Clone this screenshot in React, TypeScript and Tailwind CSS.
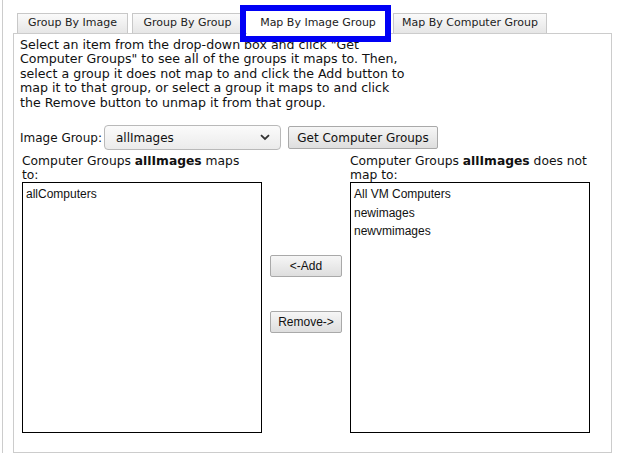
export default function App() {
  const tab =
    "flex h-[20px] items-center justify-center border-x border-t border-[#c8c8c8] bg-gradient-to-b from-[#fafafa] to-[#e6e6e6] text-[11px] text-[#222]";
  const btn =
    "border border-[#a9a9a9] rounded-[2px] bg-gradient-to-b from-[#f6f6f6] to-[#dedede] text-[#111]";

  return (
    <div className="flex h-[453px] w-[622px] overflow-hidden bg-white font-['DejaVu_Sans',sans-serif] text-[#111]">
      <div className="ml-[2px] h-full w-px shrink-0 bg-[#cccccc]" />
      <div className="ml-[10px] flex shrink-0 flex-col pt-[13px]">
        <div className="relative flex gap-[4px] pl-[4px]">
          <div className={`${tab} w-[111px]`}>Group By Image</div>
          <div className={`${tab} w-[111px]`}>Group By Group</div>
          <div className="relative z-10 flex h-[21px] w-[142px] items-center justify-center bg-white text-[11px] text-[#222]">
            Map By Image Group
          </div>
          <div className={`${tab} w-[154px]`}>Map By Computer Group</div>
          <div className="absolute left-[227px] top-[-8px] z-20 h-[37px] w-[151px] border-[6px] border-[#0000f5]" />
        </div>

        <div className="-mt-px h-[440px] w-[599px] border border-[#cccccc] px-[6px] pt-[4px]">
          <p className="text-[12.6px] leading-[14.4px]">
            Select an item from the drop-down box and click "Get
            <br />
            Computer Groups" to see all of the groups it maps to. Then,
            <br />
            select a group it does not map to and click the Add button to
            <br />
            map it to that group, or select a group it maps to and click
            <br />
            the Remove button to unmap it from that group.
          </p>

          <div className="mt-[15px] flex items-center text-[12px]">
            <span className="w-[84px]">Image Group:</span>
            <div className="flex h-[25px] w-[177px] items-center justify-between rounded-[4px] border border-[#b9b9b9] bg-gradient-to-b from-[#fbfbfb] to-[#ebebeb] pl-[11px] pr-[10px]">
              <span>allImages</span>
              <svg width="10" height="7" viewBox="0 0 10 7">
                <path d="M1 1.2 L5 5 L9 1.2" fill="none" stroke="#333" strokeWidth="1.8" />
              </svg>
            </div>
            <button className={`${btn} ml-[7px] h-[23px] w-[150px] text-[12px]`}>
              Get Computer Groups
            </button>
          </div>

          <div className="mt-[4px] flex pl-[2px]">
            <div className="w-[240px]">
              <div className="text-[12.3px] leading-[14px]">
                Computer Groups <b>allImages</b> maps
                <br />
                to:
              </div>
              <div className="h-[251px] border border-black pl-[3px] pt-[2px] font-['Liberation_Sans',Arial,sans-serif] text-[12px]">
                <div className="leading-[18.5px]">allComputers</div>
              </div>
            </div>

            <div className="flex w-[88px] flex-col items-center justify-center gap-[34px] font-['Liberation_Sans',Arial,sans-serif] text-[12px]">
              <button className={`${btn} h-[22px] w-[72px]`}>&lt;-Add</button>
              <button className={`${btn} h-[22px] w-[72px]`}>Remove-&gt;</button>
            </div>

            <div className="w-[240px]">
              <div className="text-[12.3px] leading-[14px]">
                Computer Groups <b>allImages</b> does not
                <br />
                map to:
              </div>
              <div className="h-[251px] border border-black pl-[3px] pt-[2px] font-['Liberation_Sans',Arial,sans-serif] text-[12px]">
                <div className="leading-[18.5px]">All VM Computers</div>
                <div className="leading-[18.5px]">newimages</div>
                <div className="leading-[18.5px]">newvmimages</div>
              </div>
            </div>
          </div>
        </div>
      </div>
    </div>
  );
}
